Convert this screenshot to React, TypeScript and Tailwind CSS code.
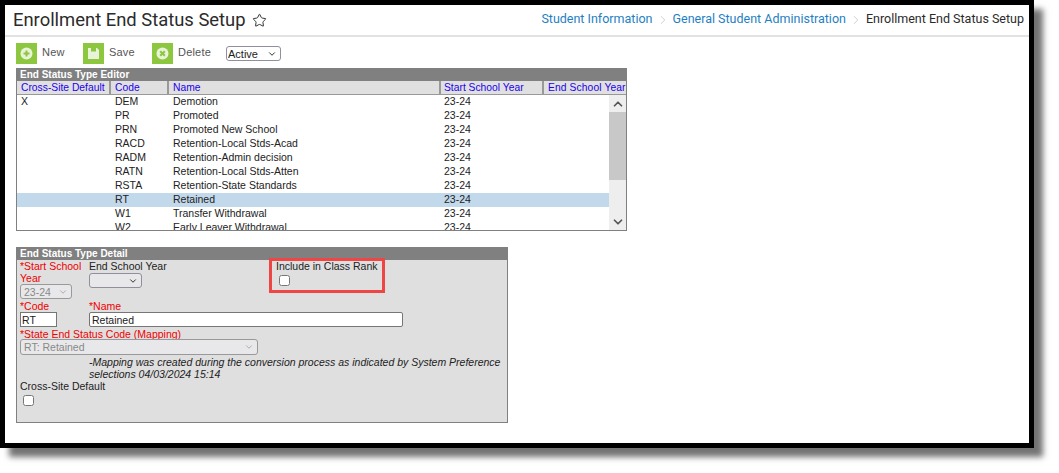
import { ChevronRight, ChevronUp, ChevronDown, Star } from "lucide-react";

const rows = [
  { def: "X", code: "DEM", name: "Demotion" },
  { def: "", code: "PR", name: "Promoted" },
  { def: "", code: "PRN", name: "Promoted New School" },
  { def: "", code: "RACD", name: "Retention-Local Stds-Acad" },
  { def: "", code: "RADM", name: "Retention-Admin decision" },
  { def: "", code: "RATN", name: "Retention-Local Stds-Atten" },
  { def: "", code: "RSTA", name: "Retention-State Standards" },
  { def: "", code: "RT", name: "Retained", selected: true },
  { def: "", code: "W1", name: "Transfer Withdrawal" },
  { def: "", code: "W2", name: "Early Leaver Withdrawal" },
];

function ToolButton({ label, kind, className }: any) {
  return (
    <div className={`flex items-center ${className}`}>
      <span className="w-[21px] h-[21px] bg-[#8dc63f] flex items-center justify-center">
        <svg width="13" height="13" viewBox="0 0 13 13">
          {kind === "new" && (
            <>
              <circle cx="6.5" cy="6.5" r="6" fill="#e8f3d8" />
              <path d="M6.5 3.5v6M3.5 6.5h6" stroke="#8dc63f" strokeWidth="2" />
            </>
          )}
          {kind === "save" && (
            <>
              <path d="M1 1h9l2 2v9H1z" fill="#e8f3d8" />
              <path d="M4 1h5v3.5H4z" fill="#8dc63f" />
            </>
          )}
          {kind === "delete" && (
            <>
              <circle cx="6.5" cy="6.5" r="6" fill="#e8f3d8" />
              <path d="M4.2 4.2l4.6 4.6M8.8 4.2l-4.6 4.6" stroke="#8dc63f" strokeWidth="2" />
            </>
          )}
        </svg>
      </span>
      <span className="ml-[5px] text-[11px] text-[#555] tracking-[0.2px] -mt-[3px]">{label}</span>
    </div>
  );
}

function HeadCell({ label, className }: any) {
  return (
    <div className={`h-full border-r-2 border-[#999] text-[#2200ee] whitespace-nowrap overflow-hidden leading-[13px] ${className}`}>
      {label}
    </div>
  );
}

function Select({ label, disabled, className }: any) {
  return (
    <span className={`relative block ${className}`}>
      <select
        disabled={disabled}
        className={`block w-full h-full appearance-none pl-[3px] border rounded-[3px] text-[10.5px] leading-[12px] ${
          disabled ? "border-[#999] bg-[#e8e8ea] text-[#888]" : "border-[#8f8f9d] bg-[#e8e8ea] text-[#222]"
        }`}
      >
        <option>{label}</option>
      </select>
      <ChevronDown
        size={10}
        strokeWidth={disabled ? 1.8 : 2.4}
        className={`absolute right-[4px] top-1/2 -translate-y-1/2 ${disabled ? "text-[#999]" : "text-[#333]"}`}
      />
    </span>
  );
}

export default function App() {
  return (
    <div className="w-[1059px] h-[473px] bg-white overflow-hidden font-['Liberation_Sans',Arial,sans-serif] text-[10.5px] text-[#222]">
      <div className="w-[1034px] h-[448px] border-[5px] border-black bg-white shadow-[9px_9px_6px_rgba(0,0,0,0.55)]">
        {/* page header */}
        <div className="h-[32px] border-b-2 border-[#e2e2e2] flex items-center justify-between pl-[8px] pr-[5px] font-['Roboto',sans-serif]">
          <div className="flex items-center text-[#2b2b2b]">
            <span className="text-[18.4px] leading-[24px]">Enrollment End Status Setup</span>
            <Star size={15} strokeWidth={1.6} className="ml-[6px] text-[#333]" />
          </div>
          <div className="flex items-center text-[12.5px] text-[#1f7fc4] -mt-[1px]">
            <span>Student Information</span>
            <ChevronRight size={14} strokeWidth={1.2} className="mx-[3px] text-[#bbb]" />
            <span>General Student Administration</span>
            <ChevronRight size={14} strokeWidth={1.2} className="mx-[3px] text-[#bbb]" />
            <span className="text-[#2b2b2b]">Enrollment End Status Setup</span>
          </div>
        </div>

        {/* toolbar */}
        <div className="flex items-start h-[25px] mt-[6px] pl-[11px]">
          <ToolButton label="New" kind="new" className="w-[67px]" />
          <ToolButton label="Save" kind="save" className="w-[69px]" />
          <ToolButton label="Delete" kind="delete" className="w-[74px]" />
          <Select label="Active" className="w-[55px] h-[15px] mt-[3px] [&_select]:bg-white [&_select]:pl-[1px] [&_select]:text-[11px]" />
        </div>

        {/* editor table */}
        <div className="ml-[11px] w-[611px] h-[163px] border border-t-0 border-[#808080]">
          <div className="h-[13px] -mx-[1px] bg-[#808080] text-white font-bold text-[10px] leading-[13px] pl-[4px]">
            End Status Type Editor
          </div>
          <div className="h-[14px] bg-[#e0e0e0] border-b border-[#999] flex text-[10.3px]">
            <HeadCell label="Cross-Site Default" className="w-[94px] pl-[4px]" />
            <HeadCell label="Code" className="w-[58px] pl-[4px]" />
            <HeadCell label="Name" className="w-[272px] pl-[4px]" />
            <HeadCell label="Start School Year" className="w-[103px] pl-[3px]" />
            <div className="flex-1 pl-[4px] text-[#2200ee] tracking-[0.1px] whitespace-nowrap overflow-hidden leading-[13px]">End School Year</div>
          </div>
          <div className="flex h-[135px]">
            <div className="flex-1 overflow-hidden">
              {rows.map((r) => (
                <div key={r.code} className={`h-[14px] flex leading-[13px] ${r.selected ? "bg-[#c2d9ec]" : ""}`}>
                  <div className="w-[94px] pl-[4px]">{r.def}</div>
                  <div className="w-[58px] pl-[4px]">{r.code}</div>
                  <div className="w-[271px] pl-[4px]">{r.name}</div>
                  <div className="pl-[4px]">23-24</div>
                </div>
              ))}
            </div>
            <div className="w-[17px] bg-[#eeeeee] flex flex-col items-center">
              <div className="h-[17px] flex items-center justify-center">
                <ChevronUp size={14} strokeWidth={3} className="text-[#555]" />
              </div>
              <div className="h-[68px] w-full bg-[#c8c8c8]" />
              <div className="flex-1" />
              <div className="h-[17px] flex items-center justify-center">
                <ChevronDown size={14} strokeWidth={3} className="text-[#555]" />
              </div>
            </div>
          </div>
        </div>

        {/* detail form */}
        <div className="ml-[11px] mt-[16px] w-[492px] h-[176px] bg-[#dfdfdf] border border-t-0 border-[#808080]">
          <div className="h-[13px] -mx-[1px] bg-[#808080] text-white font-bold text-[10px] leading-[13px] pl-[4px]">
            End Status Type Detail
          </div>
          <div className="pl-[3px] leading-[12px]">
            <div className="flex h-[39px]">
              <div className="w-[69px] text-[#f00000]">
                <div>*Start School Year</div>
                <Select disabled label="23-24" className="w-[52px] h-[15px]" />
              </div>
              <div className="w-[187px]">
                <div>End School Year</div>
                <Select label="" className="mt-[1px] w-[53px] h-[15px]" />
              </div>
              <div className="relative">
                <div>Include in Class Rank</div>
                <input type="checkbox" className="block mt-[3px] ml-[3px] w-[11px] h-[11px]" />
                <div className="absolute -left-[7px] -top-[2px] w-[116px] h-[35px] border-[3px] border-[#f04545]" />
              </div>
            </div>
            <div className="flex mt-[1px] text-[#f00000]">
              <div className="w-[69px]">*Code</div>
              <div>*Name</div>
            </div>
            <div className="flex">
              <input readOnly value="RT" className="w-[37px] h-[15px] px-[1px] border border-[#767676] bg-white text-[10.5px] mr-[32px]" />
              <input readOnly value="Retained" className="w-[314px] h-[15px] px-[2px] border border-[#767676] rounded-[2px] bg-white text-[10.5px]" />
            </div>
            <div className="text-[#f00000] mt-[1px]">*State End Status Code (Mapping)</div>
            <Select disabled label="RT: Retained" className="-mt-[1px] w-[238px] h-[16px]" />
            <div className="ml-[69px] mt-[1px] italic">
              -Mapping was created during the conversion process as indicated by System Preference selections 04/03/2024 15:14
            </div>
            <div>Cross-Site Default</div>
            <input type="checkbox" className="block mt-[3px] ml-[3px] w-[11px] h-[11px]" />
          </div>
        </div>
      </div>
    </div>
  );
}
